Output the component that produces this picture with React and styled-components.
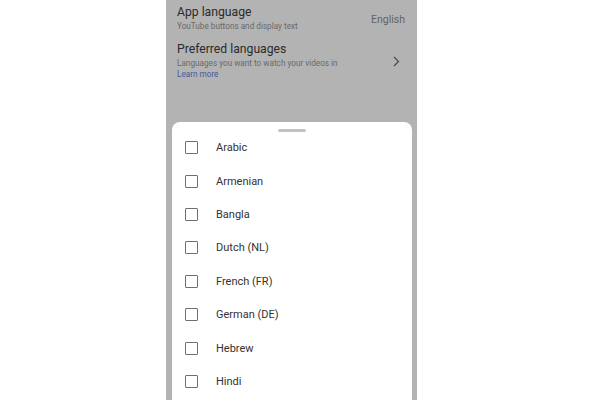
import React from 'react';
import styled, { createGlobalStyle } from 'styled-components';

const languages = ['Arabic', 'Armenian', 'Bangla', 'Dutch (NL)', 'French (FR)', 'German (DE)', 'Hebrew', 'Hindi'];

const App = () => {
    return (
        <Page>
            <GlobalStyle />
            <Phone>
                <Settings>
                    <SettingRow>
                        <SettingText>
                            <SettingTitle>App language</SettingTitle>
                            <SettingSub>YouTube buttons and display text</SettingSub>
                        </SettingText>
                        <SettingValue>English</SettingValue>
                    </SettingRow>
                    <SettingRow $top={9}>
                        <SettingText>
                            <SettingTitle>Preferred languages</SettingTitle>
                            <SettingSub>Languages you want to watch your videos in</SettingSub>
                            <LearnMore>Learn more</LearnMore>
                        </SettingText>
                        <Chevron width="7" height="11" viewBox="0 0 7 11">
                            <path d="M1 1l4.5 4.5L1 10" fill="none" stroke="#4a4a4a" strokeWidth="1.2" />
                        </Chevron>
                    </SettingRow>
                </Settings>
                <Sheet>
                    <Handle />
                    <List>
                        {languages.map(lang => (
                            <LangRow key={lang}>
                                <Checkbox />
                                <LangName>{lang}</LangName>
                            </LangRow>
                        ))}
                    </List>
                </Sheet>
            </Phone>
        </Page>
    );
};

export default App;

const GlobalStyle = createGlobalStyle`
  html, body {
    margin: 0;
    padding: 0;
    background: #ffffff;
    font-family: Roboto, "Noto Sans", sans-serif;
  }
`;

const Page = styled.div`
  width: 600px;
  height: 400px;
  overflow: hidden;
  display: flex;
  padding-left: 166px;
  box-sizing: border-box;
`;

const Phone = styled.div`
  width: 251px;
  height: 400px;
  background: #b3b3b3;
  display: flex;
  flex-direction: column;
`;

const Settings = styled.div`
  height: 122px;
  padding: 4px 12px 0 11px;
  box-sizing: border-box;
`;

const SettingRow = styled.div`
  display: flex;
  align-items: center;
  justify-content: space-between;
  margin-top: ${p => p.$top || 0}px;
`;

const SettingText = styled.div`
  display: flex;
  flex-direction: column;
`;

const SettingTitle = styled.div`
  font-size: 12.2px;
  line-height: 17px;
  color: #2b2b2b;
`;

const SettingSub = styled.div`
  font-size: 8.2px;
  line-height: 11px;
  color: #6a6a6a;
`;

const LearnMore = styled.div`
  font-size: 8.2px;
  line-height: 11px;
  color: #3f5a9c;
`;

const SettingValue = styled.div`
  font-size: 10.5px;
  color: #636363;
  margin-top: 2px;
`;

const Chevron = styled.svg`
  margin-right: 5px;
  margin-top: 2px;
`;

const Sheet = styled.div`
  flex: 1;
  margin: 0 5px 0 6px;
  background: #ffffff;
  border-radius: 8px 8px 0 0;
  padding-top: 7px;
  display: flex;
  flex-direction: column;
`;

const Handle = styled.div`
  width: 28px;
  height: 3px;
  border-radius: 2px;
  background: #c2c2c2;
  align-self: center;
`;

const List = styled.div`
  margin-top: -1px;
  display: flex;
  flex-direction: column;
`;

const LangRow = styled.div`
  height: 33.4px;
  display: flex;
  align-items: center;
  padding-left: 13px;
`;

const Checkbox = styled.div`
  width: 13px;
  height: 13px;
  box-sizing: border-box;
  border: 1.5px solid #6f6f6f;
  border-radius: 1px;
`;

const LangName = styled.div`
  margin-left: 18px;
  font-size: 11px;
  color: #333333;
`;
